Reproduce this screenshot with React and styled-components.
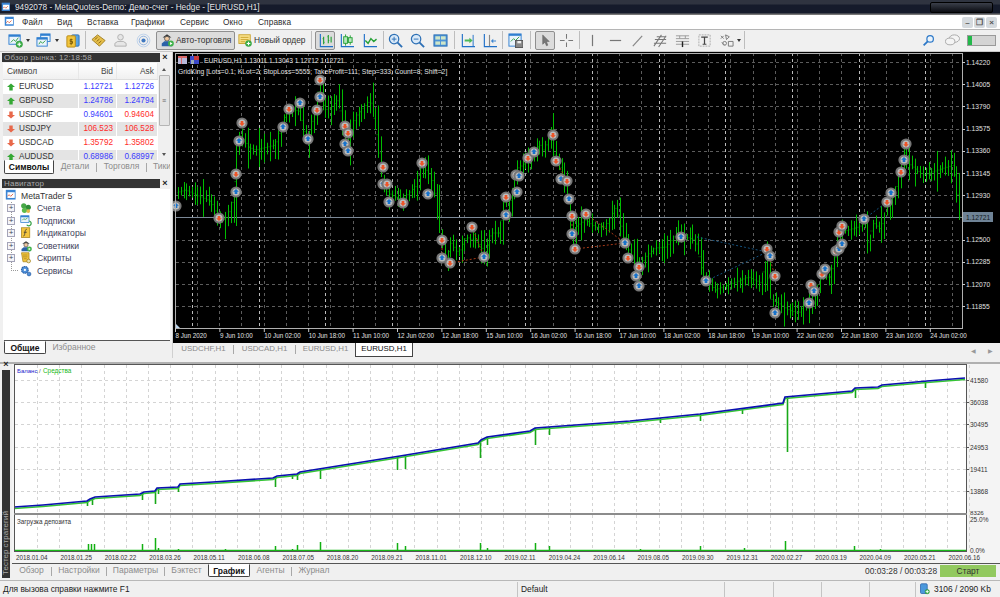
import React from 'react';
import styled, { createGlobalStyle } from 'styled-components';

const GlobalStyle = createGlobalStyle`
  html, body {
    margin: 0;
    padding: 0;
    overflow: hidden;
    background: #f0f0f0;
  }
  * { box-sizing: border-box; }
`;

const Terminal = styled.div`
  width: 1000px;
  height: 597px;
  display: flex;
  flex-direction: column;
  overflow: hidden;
  background: #f0f0f0;
  color: #333;
  font-family: "Liberation Sans", Arial, sans-serif;
  font-size: 8.4px;
`;

/* title + menu */
const TitleBar = styled.div`
  height: 15px;
  flex: none;
  display: flex;
  align-items: center;
  padding: 0 7px 1px 1px;
  gap: 3px;
  background: linear-gradient(#2f3440 0, #2f3440 4px, #151b2b 5px, #151b2b 13px, #777 14px);
  color: #e6e6e6;
  font-size: 8.25px;
`;

const TitleText = styled.span`
  flex: 1;
`;

const WindowButtons = styled.div`
  width: 63px;
  height: 11px;
  border: 1px solid #000;
  border-radius: 2px;
  background: linear-gradient(#3b3f4a, #0a0c12);
`;

const MenuBar = styled.div`
  height: 15px;
  flex: none;
  display: flex;
  align-items: center;
  padding: 0 3px 0 4px;
  background: #fff;
  border-bottom: 1px solid #b5b5b5;
`;

const MenuGap = styled.span`
  width: 6px;
  flex: none;
`;

const MenuItem = styled.span`
  width: ${p => p.$w}px;
  font-size: 8.3px;
  letter-spacing: 0.1px;
  color: #2c2c2c;
`;

const MdiButtons = styled.div`
  margin-left: auto;
  display: flex;
  gap: 1px;
`;

const MdiButton = styled.div`
  width: 11px;
  height: 11px;
  border-radius: 2px;
  background: #d5dade;
  color: #555;
  font-size: 8px;
  line-height: 11px;
  text-align: center;
  font-weight: bold;
`;

/* toolbar */
const Toolbar = styled.div`
  height: 22px;
  flex: none;
  display: flex;
  align-items: center;
  padding: 0 4px 1px 7px;
  background: #f0f0f0;
  border-bottom: 1px solid #c8c8c8;
`;

const Tool = styled.div`
  width: ${p => p.$w}px;
  height: 19px;
  margin-left: ${p => p.$ml || 0}px;
  flex: none;
  display: flex;
  align-items: center;
  justify-content: center;
  border: ${p => (p.$on ? '1px solid #8f8f8f' : 'none')};
  border-radius: 2px;
  background: ${p => (p.$on ? '#dcdcdc' : 'transparent')};
`;

const Caret = styled.div`
  width: ${p => p.$w}px;
  flex: none;
  display: flex;
  justify-content: center;
  &::after {
    content: '';
    border-left: 2.5px solid transparent;
    border-right: 2.5px solid transparent;
    border-top: 3px solid #333;
  }
`;

const Sep = styled.div`
  width: ${p => p.$w}px;
  height: 18px;
  flex: none;
  display: flex;
  justify-content: center;
  &::after {
    content: '';
    width: 1px;
    background: #bdbdbd;
  }
`;

const TextTool = styled.div`
  width: ${p => p.$w}px;
  height: 19px;
  margin-left: ${p => p.$ml || 0}px;
  flex: none;
  display: flex;
  align-items: center;
  gap: 2px;
  padding-left: 3px;
  border: ${p => (p.$on ? '1px solid #8f8f8f' : 'none')};
  border-radius: 2px;
  background: ${p => (p.$on ? '#dcdcdc' : 'transparent')};
  font-size: 8.4px;
  color: #333;
  white-space: nowrap;
`;

const Meter = styled.div`
  width: 29px;
  height: 11px;
  margin-left: 3px;
  border: 1px solid #9a9a9a;
  background: linear-gradient(90deg, #22b84a 0, #22b84a 4px, #d4d4d4 4px);
`;

const Spacer = styled.div`
  flex: 1;
`;

/* workspace */
const Workspace = styled.div`
  height: 306px;
  flex: none;
  display: flex;
`;

const LeftColumn = styled.div`
  width: 173px;
  flex: none;
  display: flex;
  flex-direction: column;
  padding-top: 1px;
  border-right: 1px solid #d0d0d0;
`;

const PanelTitle = styled.div`
  height: 9px;
  flex: none;
  display: flex;
  align-items: center;
  justify-content: space-between;
  margin: 0 2px;
  color: #aaa;
  font-size: 8px;
  letter-spacing: 0.2px;
`;

const PanelCaption = styled.div`
  width: 158px;
  height: 9px;
  padding-left: 2px;
  line-height: 9px;
  background: #333;
  white-space: nowrap;
`;

const PanelClose = styled.div`
  width: 8px;
  color: #222;
  font-weight: bold;
  font-size: 9px;
  line-height: 9px;
  text-align: center;
  margin-right: 1px;
`;

const MarketBody = styled.div`
  height: 97px;
  flex: none;
  display: flex;
  margin: 1px 2px 0 3px;
  overflow: hidden;
  background: #fff;
`;

const MarketTable = styled.div`
  width: 155px;
  flex: none;
`;

const MarketHead = styled.div`
  display: grid;
  grid-template-columns: 76px 38px 41px;
  height: 17px;
  line-height: 16px;
  background: linear-gradient(#fff, #f0f0f0);
  border-bottom: 1px solid #ddd;
  font-size: 8.4px;
  color: #444;
`;

const HeadCell = styled.div`
  padding: 0 3px;
  text-align: ${p => (p.$left ? 'left' : 'right')};
  padding-left: ${p => (p.$left ? '4px' : '3px')};
  border-right: 1px solid #e8e8e8;
`;

const MarketRow = styled.div`
  display: grid;
  grid-template-columns: 76px 38px 41px;
  height: 14px;
  line-height: 14px;
  background: ${p => (p.$odd ? '#e4e4e4' : '#fff')};
  font-size: 8.2px;
`;

const SymbolCell = styled.div`
  display: flex;
  align-items: center;
  gap: 4px;
  padding-left: 4px;
  color: #333;
  border-right: 1px solid #fff;
`;

const QuoteCell = styled.div`
  padding-right: 3px;
  text-align: right;
  color: ${p => (p.$up ? '#3a3aff' : '#ff2a2a')};
  border-right: 1px solid #fff;
`;

const ScrollBar = styled.div`
  width: 12px;
  flex: none;
  display: flex;
  flex-direction: column;
  align-items: center;
  background: #f0f0f0;
`;

const ScrollArrow = styled.div`
  height: 12px;
  flex: none;
  display: flex;
  align-items: center;
  &::after {
    content: '';
    border-left: 2.5px solid transparent;
    border-right: 2.5px solid transparent;
    ${p => (p.$down ? 'border-top: 3px solid #555;' : 'border-bottom: 3px solid #555;')}
  }
`;

const ScrollThumb = styled.div`
  width: 11px;
  height: 51px;
  flex: none;
  display: flex;
  align-items: center;
  justify-content: center;
  border: 1px solid #b5b5b5;
  border-radius: 1px;
  background: #e4e4e4;
  color: #666;
  font-size: 7px;
`;

const TabStrip = styled.div`
  height: ${p => p.$h || 14}px;
  flex: none;
  display: flex;
  align-items: stretch;
  margin: ${p => p.$m || 0};
  padding-left: ${p => p.$pl || 0}px;
  overflow: hidden;
  border-top: ${p => (p.$line ? '1px solid #555' : 'none')};
  background: ${p => p.$bg || 'transparent'};
  white-space: nowrap;
  font-size: 8.5px;
`;

const Tab = styled.div`
  width: ${p => p.$w}px;
  height: ${p => (p.$short ? '13px' : 'auto')};
  flex: none;
  text-align: center;
  line-height: 13px;
  color: ${p => (p.$on ? '#111' : '#8c8c8c')};
  background: ${p => (p.$on ? '#fff' : 'transparent')};
  font-weight: ${p => (p.$on ? 'bold' : 'normal')};
  border: ${p => (p.$on ? '1px solid #444' : 'none')};
  border-top: ${p => (p.$on ? '1px solid #fff' : 'none')};
  border-radius: 0 0 2px 2px;
`;

const TabDivider = styled.div`
  width: 1px;
  height: 9px;
  align-self: center;
  flex: none;
  background: #a8a8a8;
`;

const NavigatorTitle = styled(PanelTitle)`
  margin-top: 5px;
`;

const NavigatorBody = styled.div`
  height: 151px;
  flex: none;
  margin: 1px 2px 0 3px;
  background: #fff;
  position: relative;
`;

const TreeRoot = styled.div`
  height: 13px;
  display: flex;
  align-items: center;
  gap: 3px;
  padding-left: 2px;
  font-size: 8.6px;
  color: #333;
`;

const TreeRow = styled.div`
  height: 12.5px;
  display: flex;
  align-items: center;
  gap: 5px;
  padding-left: 4px;
  font-size: 8.6px;
  color: #40405a;
`;

const TreeLine = styled.div`
  position: absolute;
  left: 8px;
  top: 13px;
  width: 7px;
  height: 69px;
  border-left: 1px dotted #999;
  border-bottom: 1px dotted #999;
`;

const Expander = styled.div`
  width: 8px;
  height: 8px;
  flex: none;
  position: relative;
  z-index: 1;
  border: 1px solid #a4a4b8;
  background: #f4f4f8;
  color: #445;
  font-size: 8px;
  line-height: 6px;
  text-align: center;
  visibility: ${p => (p.$hide ? 'hidden' : 'visible')};
`;

const ChartColumn = styled.div`
  flex: 1;
  display: flex;
  flex-direction: column;
`;

const ChartSvg = styled.svg`
  display: block;
  width: 827px;
  height: 291px;
  flex: none;
  background: #000;
`;

const AxisText = styled.text`
  font-family: "Liberation Sans", Arial, sans-serif;
  font-size: ${p => p.$size || 6.7}px;
  fill: ${p => p.$fill || '#e0e0e0'};
`;

const ChartTabs = styled.div`
  height: 15px;
  flex: none;
  display: flex;
  align-items: flex-start;
  padding-left: 1px;
  font-size: 7.9px;
`;

const ChartTab = styled.div`
  width: ${p => p.$w}px;
  height: ${p => (p.$on ? 14 : 13)}px;
  flex: none;
  text-align: center;
  line-height: 12px;
  color: ${p => (p.$on ? '#111' : '#8a8a8a')};
  background: ${p => (p.$on ? '#fff' : 'transparent')};
  border: ${p => (p.$on ? '1px solid #444' : 'none')};
  border-top: none;
`;

const ChartTabDivider = styled(TabDivider)`
  align-self: flex-start;
  margin-top: 2px;
`;

const TabArrows = styled.div`
  margin-left: auto;
  display: flex;
  gap: 12px;
  padding: 4px 7px 0 0;
  color: #999;
  font-size: 6px;
`;

const Splitter = styled.div`
  height: 6px;
  flex: none;
  background: #f0f0f0;
  border-bottom: 2px solid #b0b0b0;
`;

/* strategy tester */
const Tester = styled.div`
  height: 214px;
  flex: none;
  display: flex;
`;

const TesterSide = styled.div`
  width: 12px;
  flex: none;
  display: flex;
  flex-direction: column;
  padding-left: 2px;
  margin-top: -4px;
`;

const TesterClose = styled(PanelClose)`
  height: 10px;
  margin: 0;
`;

const TesterCaption = styled.div`
  flex: 1;
  width: 8px;
  padding-top: 3px;
  background: #333;
  color: #aaa;
  font-size: 8px;
  line-height: 8px;
  writing-mode: vertical-rl;
  transform: rotate(180deg);
  white-space: nowrap;
`;

const TesterMain = styled.div`
  flex: 1;
  display: flex;
  flex-direction: column;
`;

const PlotSvg = styled.svg`
  display: block;
  width: 988px;
  height: 199px;
  flex: none;
  background: #f4f4f4;
`;

const TesterTabs = styled(TabStrip)`
  align-items: flex-start;
`;

const TesterClock = styled.div`
  margin-left: auto;
  width: 75px;
  line-height: 14px;
  font-size: 8.4px;
  color: #333;
`;

const StartButton = styled.div`
  width: 56px;
  height: 12px;
  margin: 1px 4px 0 0;
  flex: none;
  background: #92c95f;
  color: #333;
  text-align: center;
  line-height: 12px;
  font-size: 8.4px;
`;

const StatusBar = styled.div`
  height: 17px;
  flex: none;
  margin-top: 2px;
  display: flex;
  align-items: center;
  border-top: 1px solid #b8b8b8;
  background: #f0f0f0;
  font-size: 8.4px;
  color: #222;
`;

const StatusCell = styled.div`
  width: ${p => p.$w}px;
  height: 15px;
  flex: none;
  display: flex;
  align-items: center;
  gap: 3px;
  padding-left: 3px;
  border-right: ${p => (p.$last ? 'none' : '1px solid #c4c4c4')};
  white-space: nowrap;
`;

const GlyphSvg = styled.svg`
  flex: none;
  display: block;
`;

/* drawings */
const Win = ({ x = 1, y = 2, w = 12, h = 10, c = '#2f7fd0' }) => (
  <g>
    <rect x={x} y={y} width={w} height={h} fill="#eaf3fb" stroke={c} />
    <rect x={x} y={y} width={w} height={2} fill={c} />
  </g>
);

const Plus = ({ cx = 12, cy = 12, r = 3.5 }) => (
  <g>
    <circle cx={cx} cy={cy} r={r} fill="#3fb24a" stroke="#1f8a2c" strokeWidth="0.5" />
    <path d={`M${cx - 2} ${cy}h4M${cx} ${cy - 2}v4`} stroke="#fff" strokeWidth="1.2" />
  </g>
);

const Axes = () => <path d="M2.5 1v13.5H16" fill="none" stroke="#1f70c8" strokeWidth="1.2" />;

const drawings = {
  newChart: <><Win /><path d="M3 10l3-3 2 2 3-4" fill="none" stroke="#35a045" /><Plus /></>,
  profiles: <><Win x={5} y={1} w={10} h={8} /><Win x={1} y={5} w={11} h={9} /><path d="M3 12l2-3 2 2 3-3" fill="none" stroke="#35a045" /></>,
  money: <><rect x="7" y="2" width="8" height="12" rx="1" fill="#5aa3e0" stroke="#2c6fb5" /><rect x="2" y="3" width="9" height="12" rx="1" fill="#f2c53d" stroke="#b98a14" /><path d="M6.5 6v7M8 7H5.5v2H8v2H5" fill="none" stroke="#7a5a08" /></>,
  book: <><path d="M1 7l6-5 8 6-6 6z" fill="#e7bf4a" stroke="#a07e20" /><path d="M4 7l3-2.5M6 9l3-2.5M8 11l3-2.5" stroke="#8a6a14" /></>,
  person: <><circle cx="8" cy="4.5" r="3" fill="#e6e6e6" stroke="#b0b0b0" /><path d="M2 14v-3l3-2h6l3 2v3z" fill="#e6e6e6" stroke="#b0b0b0" /></>,
  wave: <><circle cx="8" cy="8" r="6.8" fill="none" stroke="#bcd0ea" /><circle cx="8" cy="8" r="4.6" fill="none" stroke="#8fb0dc" /><circle cx="8" cy="8" r="2.2" fill="#3f78c0" /></>,
  robot: <><path d="M3 5h10L8 1.5z" fill="#333" /><circle cx="8" cy="6.5" r="2.8" fill="#f0c8a0" stroke="#555" /><path d="M2 15v-3l3-2.5h6l3 2.5v3z" fill="#2c62a8" /><circle cx="12.5" cy="12" r="3.3" fill="#3fb24a" /><path d="M11.5 10.3v3.4l2.8-1.7z" fill="#fff" /></>,
  order: <><rect x="1" y="2" width="13" height="10" fill="#f8e08a" stroke="#c9a12a" /><path d="M3 5h9M3 7.5h9M3 10h5" stroke="#c9a12a" /><Plus cx={12} cy={12} /></>,
  bars: <><Axes /><path d="M6 4v8M5 6h1M6 10h1M11 2v9M10 4h1M11 8h1M14 4v6" fill="none" stroke="#25a035" strokeWidth="1.2" /></>,
  candles: <><Axes /><path d="M7 1.5v12M12 2.5v10" stroke="#25a035" /><rect x="5" y="4" width="4" height="7" fill="#b8e8be" stroke="#25a035" /><rect x="10" y="5" width="4" height="5" fill="#b8e8be" stroke="#25a035" /></>,
  line: <><Axes /><path d="M3.5 8l3 3 3-5 3 3 3-2.5" fill="none" stroke="#25a035" strokeWidth="1.5" /></>,
  zoomIn: <><circle cx="6.5" cy="6.5" r="5" fill="#d9e9f8" stroke="#2c6fb5" strokeWidth="1.3" /><path d="M10 10l5 5" stroke="#2c6fb5" strokeWidth="2" /><path d="M4 6.5h5M6.5 4v5" stroke="#2c6fb5" /></>,
  zoomOut: <><circle cx="6.5" cy="6.5" r="5" fill="#d9e9f8" stroke="#2c6fb5" strokeWidth="1.3" /><path d="M10 10l5 5" stroke="#2c6fb5" strokeWidth="2" /><path d="M4 6.5h5" stroke="#2c6fb5" /></>,
  tile: <><rect x="1" y="2" width="14" height="12" fill="#4d94d8" stroke="#2c6fb5" /><rect x="2.5" y="3.5" width="5" height="3.5" fill="#cfe6c8" /><rect x="8.5" y="3.5" width="5" height="3.5" fill="#cfe6c8" /><rect x="2.5" y="9" width="5" height="3.5" fill="#cfe6c8" /><rect x="8.5" y="9" width="5" height="3.5" fill="#cfe6c8" /></>,
  shift: <><Axes /><path d="M14 2v12" stroke="#1f70c8" /><path d="M5 7h5V5l3.5 3L10 11V9H5z" fill="#4cb858" /></>,
  scroll: <><Axes /><path d="M8 2v12" stroke="#888" strokeWidth="1.2" /><path d="M15 8H12V6l-2.5 2.5L12 11V9h3z" fill="#3f86d0" /></>,
  template: <><Win x={1} y={1} w={13} h={13} /><path d="M3 9l3-3 2 2 4-4" fill="none" stroke="#35a045" /><rect x="8" y="8" width="8" height="7.5" fill="#888" stroke="#555" /><rect x="10" y="8.5" width="4" height="2.5" fill="#eee" /></>,
  cursor: <path d="M5 2l7 7H9l1.5 4-1.5.6L7.5 9.8 5 12z" fill="#777" stroke="#555" strokeWidth="0.5" />,
  cross: <path d="M8 1v5M8 10v5M1 8h5M10 8h5" stroke="#777" strokeWidth="1.1" />,
  vline: <path d="M8 2v12" stroke="#777" strokeWidth="1.3" />,
  hline: <path d="M2 8h12" stroke="#777" strokeWidth="1.3" />,
  dline: <path d="M3 14L13 3" stroke="#888" strokeWidth="1.3" />,
  channel: <path d="M1 14L9 2M6 15l8-12M1 11h13M2 7h12M4 4h10" fill="none" stroke="#777" strokeWidth="1.1" />,
  fibo: <><path d="M1 3h14M1 6h14M1 9h14M1 12h14" stroke="#999" /><path d="M11 3v3M5 3v3" stroke="#999" /><path d="M8 9v6" stroke="#222" strokeWidth="1.5" /></>,
  text: <><rect x="2" y="2" width="12" height="12" fill="none" stroke="#aaa" strokeDasharray="2 1" /><path d="M4.5 4.5h7M8 4.5V12M6 12h4" stroke="#444" strokeWidth="1.3" /></>,
  shapes: <><path d="M2 3l3 3M5 3L2 6M7 2l4 2-3 3zM3 10l3 3M10 9h5v5h-5z" fill="none" stroke="#777" /><circle cx="6" cy="11" r="2" fill="none" stroke="#777" /></>,
  search: <><circle cx="10" cy="6" r="4" fill="#eaf3fb" stroke="#2c78c8" strokeWidth="1.5" /><path d="M7 9l-5 5" stroke="#2c78c8" strokeWidth="2.2" /></>,
  chat: <><ellipse cx="10" cy="6" rx="5.5" ry="4" fill="#f4f4f4" stroke="#a8a8a8" /><ellipse cx="5.5" cy="9" rx="5" ry="3.6" fill="#f4f4f4" stroke="#a8a8a8" /></>,
  logo: <><rect x="1" y="1" width="12" height="12" fill="#3a84d4" /><rect x="3" y="4" width="9" height="7" fill="#fff" /><path d="M3 9l2-2 2 2 3-3" fill="none" stroke="#d95030" /></>,
  accounts: <><circle cx="5" cy="5" r="3.5" fill="#48a848" /><circle cx="11" cy="7" r="3.5" fill="#2e8c38" /><circle cx="6" cy="11" r="3.5" fill="#5cbc4c" /><circle cx="11" cy="12" r="2.5" fill="#e0b84a" /></>,
  subs: <><Win x={1} y={1} w={11} h={9} /><path d="M3 7l2-2 2 1 3-2" fill="none" stroke="#35a045" /><path d="M9 13a3.2 3.2 0 1 0 3-5" fill="none" stroke="#35a045" strokeWidth="1.6" /></>,
  indicators: <><rect x="2" y="1" width="11" height="13" fill="#f4c63f" stroke="#a8841c" /><path d="M9 3C7 3 7 5 6.5 8S6 12 4.5 12M5 7h4" fill="none" stroke="#333" /></>,
  scripts: <><path d="M2 1h10v12H4z" fill="#f2c53d" stroke="#a8841c" /><path d="M4 4h6M4 6.5h6M5 9h4" stroke="#a8841c" /><circle cx="11.5" cy="12" r="2.5" fill="#e9e2b8" stroke="#a8841c" /></>,
  services: <><circle cx="6.5" cy="6.5" r="4.5" fill="#4e8fd8" stroke="#2c62a8" strokeDasharray="2 0.7" strokeWidth="1.5" /><circle cx="6.5" cy="6.5" r="1.5" fill="#fff" /><circle cx="12" cy="12" r="2.5" fill="#4e8fd8" stroke="#2c62a8" /></>,
  disk: <><rect x="2" y="1" width="9" height="13" rx="1.5" fill="#4a98dc" stroke="#2c62a8" /><Plus cx={11} cy={11.5} r={3} /></>,
};

const Glyph = ({ name, size = 16 }) => (
  <GlyphSvg width={size} height={size} viewBox="0 0 16 16">
    {drawings[name]}
  </GlyphSvg>
);

const TrendArrow = ({ up }) => (
  <GlyphSvg width="8" height="8" viewBox="0 0 7 7">
    {up
      ? <path d="M3.5 0.5L7 3.5H5V6.5H2V3.5H0z" fill="#35a835" />
      : <path d="M3.5 6.5L7 3.5H5V0.5H2V3.5H0z" fill="#e8684a" />}
  </GlyphSvg>
);

/* data */
const menu = [['Файл', 35], ['Вид', 30], ['Вставка', 44], ['Графики', 49], ['Сервис', 43], ['Окно', 35], ['Справка', 40]];

const quotes = [
  ['EURUSD', '1.12721', '1.12726', 1, 1, 1],
  ['GBPUSD', '1.24786', '1.24794', 1, 1, 1],
  ['USDCHF', '0.94601', '0.94604', 1, 0, 0],
  ['USDJPY', '106.523', '106.528', 0, 0, 0],
  ['USDCAD', '1.35792', '1.35802', 0, 0, 0],
  ['AUDUSD', '0.68986', '0.68997', 1, 1, 1],
];

const tree = [['accounts', 'Счета'], ['subs', 'Подписки'], ['indicators', 'Индикаторы'], ['robot', 'Советники'], ['scripts', 'Скрипты'], ['services', 'Сервисы']];

const priceTrack = [
  [176, 205], [177, 193], [187, 190], [203, 197], [213, 202], [220, 218], [227, 220], [233, 207], [237, 177], [240, 133], [250, 147], [257, 150], [277, 145], [283, 127], [288, 113], [300, 110], [303, 120], [308, 140], [317, 113], [320, 90], [327, 110], [333, 107], [340, 100], [345, 127], [348, 147], [357, 117], [363, 110], [372, 100], [377, 127], [382, 160], [383, 180], [390, 193], [403, 200], [417, 187], [423, 163], [433, 177], [438, 200], [440, 225], [442, 240], [447, 263], [453, 243], [460, 253], [468, 237], [480, 243], [487, 253], [493, 233], [502, 233], [505, 203], [513, 200], [517, 170], [527, 163], [533, 152], [542, 145], [545, 150], [553, 135], [557, 160], [563, 170], [568, 187], [570, 217], [573, 233], [577, 227], [587, 220], [597, 227], [607, 227], [618, 207], [622, 223], [627, 243], [633, 253], [640, 270], [647, 257], [657, 248], [668, 247], [677, 235], [687, 237], [697, 240], [702, 263], [707, 280], [717, 290], [730, 285], [750, 277], [763, 283], [767, 255], [770, 277], [773, 300], [780, 303], [790, 310], [800, 313], [808, 303], [817, 293], [823, 277], [832, 277], [837, 257], [840, 233], [850, 230], [860, 227], [868, 223], [870, 243], [875, 223], [883, 230], [887, 207], [893, 203], [900, 180], [905, 150], [912, 165], [925, 175], [940, 170], [955, 165], [960, 200], [962, 217],
];

const interpolate = (track, x) => {
  for (let i = 1; i < track.length; i++) {
    if (x <= track[i][0]) {
      const [x0, y0] = track[i - 1];
      const [x1, y1] = track[i];
      return y0 + ((y1 - y0) * (x - x0)) / (x1 - x0 || 1);
    }
  }
  return track[track.length - 1][1];
};

// one path for the wicks, one dimmer for the open/close ticks
const buildBars = () => {
  let seed = 77;
  const rnd = () => {
    seed = (seed * 1664525 + 1013904223) % 4294967296;
    return seed / 4294967296;
  };
  let wicks = '';
  let ticks = '';
  for (let x = 178; x < 961; x += 2.78) {
    const px = Math.round(x) + 0.5;
    const mid = interpolate(priceTrack, x);
    const next = interpolate(priceTrack, x + 2.78);
    const spike = rnd() < 0.12 ? 9 : 0;
    const spread = 3 + rnd() * 7 + Math.abs(next - mid) * 0.6;
    const up = mid - spread * (0.5 + rnd()) - (rnd() < 0.5 ? spike : 0);
    const down = mid + spread * (0.5 + rnd()) + spike;
    wicks += `M${px} ${up.toFixed(1)}V${down.toFixed(1)}`;
    ticks += `M${px - 1} ${mid.toFixed(1)}h1M${px} ${next.toFixed(1)}h1`;
  }
  return { wicks, ticks };
};

const marks = [
  ['b', 176, 206], ['r', 219, 218], ['b', 236, 192], ['r', 236, 174], ['b', 239, 141], ['r', 242, 123], ['b', 283, 127], ['r', 289, 109], ['b', 300, 103], ['b', 308, 139], ['r', 317, 110], ['b', 320, 97], ['r', 320, 80], ['r', 345, 126], ['r', 348, 133], ['b', 345, 144], ['b', 348, 151], ['r', 383, 167], ['b', 383, 184], ['r', 387, 184], ['b', 389, 202], ['r', 403, 203], ['b', 428, 194], ['r', 422, 163],
  ['r', 442, 240], ['b', 442, 258], ['r', 450, 263], ['r', 472, 227], ['b', 484, 257], ['r', 506, 197], ['b', 506, 215], ['b', 517, 192], ['r', 516, 175], ['b', 519, 176], ['r', 528, 158], ['b', 534, 152], ['r', 553, 135], ['r', 556, 161], ['b', 561, 179], ['r', 567, 181], ['b', 569, 199], ['r', 572, 216], ['b', 572, 234], ['r', 575, 249], ['r', 586, 214], ['b', 625, 243], ['r', 628, 258], ['r', 639, 267], ['b', 636, 276], ['b', 639, 286], ['b', 681, 237], ['b', 706, 281],
  ['r', 767, 249], ['b', 770, 256], ['r', 775, 276], ['b', 775, 313], ['b', 809, 303], ['r', 811, 285], ['b', 814, 291], ['r', 822, 274], ['b', 825, 269], ['r', 836, 251], ['b', 839, 249], ['b', 842, 244], ['r', 839, 232], ['r', 842, 226], ['b', 864, 219], ['r', 887, 202], ['b', 891, 193], ['r', 901, 172], ['b', 904, 160], ['r', 906, 144],
];

const tradeLines = [
  ['#a83a18', 450, 263, 484, 257], ['#a83a18', 472, 227, 484, 257], ['#a83a18', 442, 240, 442, 258],
  ['#a83a18', 586, 214, 625, 243], ['#a83a18', 575, 249, 625, 243], ['#a83a18', 556, 161, 567, 181], ['#a83a18', 572, 216, 572, 234],
  ['#14507c', 697, 237, 767, 252], ['#14507c', 706, 281, 767, 252], ['#14507c', 864, 219, 887, 202], ['#a83a18', 767, 249, 775, 276],
];

const priceLabels = ['1.14220', '1.14005', '1.13790', '1.13575', '1.13360', '1.13145', '1.12930', null, '1.12500', '1.12285', '1.12070', '1.11855'];
const priceGrid = Array.from({ length: 12 }, (_, i) => 62 + i * 22.2);

const timeLabels = ['8 Jun 2020', '9 Jun 10:00', '10 Jun 02:00', '10 Jun 18:00', '11 Jun 10:00', '12 Jun 02:00', '12 Jun 18:00', '15 Jun 10:00', '16 Jun 02:00', '16 Jun 18:00', '17 Jun 10:00', '18 Jun 02:00', '18 Jun 18:00', '19 Jun 10:00', '22 Jun 02:00', '22 Jun 18:00', '23 Jun 10:00', '24 Jun 02:00'];

const Marker = ({ kind, x, y }) => (
  <g>
    <circle cx={x} cy={y} r="5.6" fill="#767676" />
    <circle cx={x} cy={y} r="3.5" fill="#bcbcbc" />
    <path
      d={kind === 'r'
        ? `M${x} ${y + 3}l-2.8-2.8h1.5v-2.2h2.6v2.2h1.5z`
        : `M${x} ${y - 3}l-2.8 2.8h1.5v2.2h2.6v-2.2h1.5z`}
      fill={kind === 'r' ? '#ee5528' : '#1672cc'}
    />
  </g>
);

const PriceChart = () => {
  const verticals = Array.from({ length: 35 }, (_, i) => Math.round(197 + i * 22.22) + 0.5);
  const days = Array.from({ length: 12 }, (_, i) => Math.round(192 + i * 66.66) + 0.5);
  const { wicks, ticks } = buildBars();
  return (
    <ChartSvg viewBox="173 52 827 291">
      <g stroke="#5c5c5c" strokeDasharray="3 3" strokeWidth="1">
        {priceGrid.map(y => <line key={y} x1="176" x2="962" y1={Math.round(y) + 0.5} y2={Math.round(y) + 0.5} />)}
        {verticals.map(x => <line key={x} x1={x} x2={x} y1="53" y2="328" />)}
      </g>
      <g stroke="#bcbcbc" strokeDasharray="3 3" strokeWidth="1">
        {days.map(x => <line key={x} x1={x} x2={x} y1="53" y2="328" />)}
      </g>
      <line x1="176" x2="962" y1="217.5" y2="217.5" stroke="#7a8796" />
      <path d={ticks} stroke="#007a00" strokeWidth="1" fill="none" />
      <path d={wicks} stroke="#00bc00" strokeWidth="1" fill="none" />
      <g strokeDasharray="2 2" strokeWidth="1">
        {tradeLines.map(([c, x1, y1, x2, y2]) => (
          <line key={`${x1}-${y1}-${x2}`} x1={x1} y1={y1} x2={x2} y2={y2} stroke={c} />
        ))}
      </g>
      {marks.map(([kind, x, y]) => <Marker key={`${x}-${y}`} kind={kind} x={x} y={y} />)}
      <rect x="175.5" y="53.5" width="787" height="275" fill="none" stroke="#b0b0b0" />
      <path d="M176 328v-4l4 4z" fill="#bcd6ee" />
      <rect x="178" y="56" width="9" height="8" fill="#b8b8d8" />
      <path d="M178 56h9v2h-9zM181 58h1v6h-1z" fill="#d86a6a" />
      <rect x="190" y="56" width="9" height="8" fill="#3a48c8" />
      <path d="M194 56h5v4h-5z" fill="#c83a3a" />
      <path d="M191 60h3v4h-3z" fill="#9ab" />
      <AxisText x="204" y="63" $size={6.6}>EURUSD,H1  1.13011 1.13043 1.12712 1.12721</AxisText>
      <AxisText x="178" y="74" $size={6.75}>GridKing [Lots=0.1; KLot=2; StopLoss=5555; TakeProfit=111; Step=333; Count=8; Shift=2]</AxisText>
      {priceGrid.map((y, i) => priceLabels[i] && (
        <g key={y}>
          <line x1="962" x2="965" y1={Math.round(y) + 0.5} y2={Math.round(y) + 0.5} stroke="#c8c8c8" />
          <AxisText x="966" y={y + 2.5}>{priceLabels[i]}</AxisText>
        </g>
      ))}
      <rect x="963" y="212" width="30" height="10" fill="#6f8396" />
      <AxisText x="966" y="220" $fill="#101820">1.12721</AxisText>
      {timeLabels.map((label, i) => (
        <g key={label}>
          <line x1={175.5 + i * 44.4} x2={175.5 + i * 44.4} y1="328" y2="332" stroke="#c8c8c8" />
          <AxisText x={175.5 + i * 44.4} y="338" $size={6.3}>{label}</AxisText>
        </g>
      ))}
    </ChartSvg>
  );
};

const balance = [[14, 507], [43, 505], [87, 501], [90, 499], [95, 497], [140, 494], [144, 492], [155, 491], [157, 488], [178, 487], [180, 484], [213, 482], [273, 478], [277, 476], [297, 474], [300, 472], [350, 464], [400, 456], [478, 443], [481, 440], [487, 437], [530, 431], [535, 428], [630, 421], [700, 414], [783, 403], [785, 397], [852, 391], [855, 388], [878, 387], [882, 385], [927, 381], [965, 378]];

const dips = [[87, 506], [92, 505], [142, 500], [155, 504], [158, 494], [178, 492], [275, 487], [292, 479], [297, 480], [320, 479], [397, 470], [405, 469], [480, 458], [487, 445], [535, 445], [549, 435], [660, 423], [700, 421], [742, 414], [787, 452], [855, 398], [925, 388]];

const loads = [[88, 7], [91, 7], [94, 7], [142, 7], [155, 13], [158, 3], [178, 2], [275, 5], [292, 2], [297, 6], [320, 9], [397, 8], [405, 5], [480, 8], [487, 3], [535, 8], [549, 5], [700, 5], [744, 3], [785, 10], [854, 5], [30, 1], [45, 1], [225, 2], [640, 2], [880, 2]];

const balanceLabels = ['41580', '36038', '30495', '24953', '19411', '13868'];
const dateLabels = ['2018.01.04', '2018.01.25', '2018.02.22', '2018.03.26', '2018.05.11', '2018.06.08', '2018.07.05', '2018.08.20', '2018.09.21', '2018.11.01', '2018.12.10', '2019.02.11', '2019.04.24', '2019.06.14', '2019.08.05', '2019.09.30', '2019.12.31', '2020.02.27', '2020.03.19', '2020.04.09', '2020.05.21', '2020.06.16'];

const BalancePlot = () => {
  const line = balance.map(p => p.join(',')).join(' ');
  const equity = balance.map(([x, y]) => `${x},${y + 1.5}`).join(' ');
  const verticals = Array.from({ length: 43 }, (_, i) => Math.round(37 + i * 22.2) + 0.5);
  const rows = balanceLabels.map((_, i) => 380.5 + Math.round(i * 22.2));
  return (
    <PlotSvg viewBox="12 364 988 199">
      <rect x="14.5" y="364.5" width="952" height="187" fill="#fff" />
      <g stroke="#d4d4d4" strokeDasharray="3 3">
        {verticals.map(x => <line key={x} x1={x} x2={x} y1="365" y2="551" />)}
        {rows.map(y => <line key={y} x1="15" x2="966" y1={y} y2={y} />)}
      </g>
      <path d={dips.map(([x, y]) => `M${x + 0.5} ${Math.round(interpolate(balance, x))}V${y}`).join('')} stroke="#18a818" strokeWidth="1.6" fill="none" />
      <polyline points={equity} fill="none" stroke="#35c435" strokeWidth="1.6" />
      <polyline points={line} fill="none" stroke="#0a10b0" strokeWidth="1.7" />
      <path d={loads.map(([x, h]) => `M${x + 0.5} 551V${551 - h}`).join('')} stroke="#12b012" strokeWidth="1.5" fill="none" />
      <line x1="15" x2="966" y1="550.5" y2="550.5" stroke="#18b818" strokeWidth="1.5" />
      <rect x="14.5" y="364.5" width="952" height="187" fill="none" stroke="#555" />
      <rect x="14" y="513" width="953" height="2" fill="#8c8c8c" />
      <AxisText x="17" y="372.5" $size={6} $fill="#2222cc">Баланс</AxisText>
      <AxisText x="39" y="372.5" $size={6} $fill="#555">/</AxisText>
      <AxisText x="43" y="372.5" $size={6.4} $fill="#20b820">Средства</AxisText>
      <AxisText x="17" y="523.5" $size={6.3} $fill="#333">Загрузка депозита</AxisText>
      {balanceLabels.map((label, i) => (
        <g key={label}>
          <line x1="966" x2="969" y1={rows[i]} y2={rows[i]} stroke="#555" />
          <AxisText x="970" y={rows[i] + 2.5} $size={6.5} $fill="#333">{label}</AxisText>
        </g>
      ))}
      <AxisText x="970" y="515" $size={6.2} $fill="#333">8326</AxisText>
      <AxisText x="970" y="522" $size={6.5} $fill="#333">25.0%</AxisText>
      <AxisText x="970" y="552.5" $size={6.5} $fill="#333">0.0%</AxisText>
      {dateLabels.map((label, i) => (
        <AxisText key={label} x={16 + i * 44.4} y="560" $size={6.3} $fill="#333">{label}</AxisText>
      ))}
    </PlotSvg>
  );
};

const tools = [
  ['tool', 'newChart', 16], ['caret', 10], ['tool', 'profiles', 20], ['caret', 8], ['tool', 'money', 22], ['sep', 4],
  ['tool', 'book', 22], ['tool', 'person', 23], ['tool', 'wave', 22],
];

const toolsAfter = [
  ['sep', 8], ['on', 'bars', 20], ['tool', 'candles', 22], ['tool', 'line', 24], ['sep', 4], ['tool', 'zoomIn', 20], ['tool', 'zoomOut', 24], ['tool', 'tile', 22],
  ['sep', 6], ['tool', 'shift', 20], ['tool', 'scroll', 24], ['sep', 3], ['tool', 'template', 22], ['sep', 9], ['on', 'cursor', 20], ['tool', 'cross', 22], ['sep', 4],
  ['tool', 'vline', 22], ['tool', 'hline', 24], ['tool', 'dline', 20], ['tool', 'channel', 26], ['tool', 'fibo', 18], ['tool', 'text', 26], ['tool', 'shapes', 18], ['caret', 8], ['sep', 2],
];

const renderTools = list => list.map(([kind, a, b], i) => {
  if (kind === 'caret') return <Caret key={i} $w={a} />;
  if (kind === 'sep') return <Sep key={i} $w={a} />;
  return <Tool key={i} $w={b} $on={kind === 'on'}><Glyph name={a} size={15} /></Tool>;
});

export default function App() {
  return (
    <Terminal>
      <GlobalStyle />
      <TitleBar>
        <Glyph name="logo" size={11} />
        <TitleText>9492078 - MetaQuotes-Demo: Демо-счет - Hedge - [EURUSD,H1]</TitleText>
        <WindowButtons />
      </TitleBar>
      <MenuBar>
        <Glyph name="logo" size={12} />
        <MenuGap />
        {menu.map(([label, w]) => <MenuItem key={label} $w={w}>{label}</MenuItem>)}
        <MdiButtons>
          <MdiButton>–</MdiButton>
          <MdiButton>❐</MdiButton>
          <MdiButton>×</MdiButton>
        </MdiButtons>
      </MenuBar>
      <Toolbar>
        {renderTools(tools)}
        <TextTool $w={79} $ml={2} $on><Glyph name="robot" size={14} />Авто-торговля</TextTool>
        <TextTool $w={72}><Glyph name="order" size={14} />Новый ордер</TextTool>
        {renderTools(toolsAfter)}
        <Spacer />
        <Tool $w={16}><Glyph name="search" size={13} /></Tool>
        <Tool $w={24} $ml={4}><Glyph name="chat" size={15} /></Tool>
        <Meter />
      </Toolbar>
      <Workspace>
        <LeftColumn>
          <PanelTitle>
            <PanelCaption>Обзор рынка: 12:18:58</PanelCaption>
            <PanelClose>×</PanelClose>
          </PanelTitle>
          <MarketBody>
            <MarketTable>
              <MarketHead>
                <HeadCell $left>Символ</HeadCell>
                <HeadCell>Bid</HeadCell>
                <HeadCell>Ask</HeadCell>
              </MarketHead>
              {quotes.map(([symbol, bid, ask, bidUp, askUp, up], i) => (
                <MarketRow key={symbol} $odd={i % 2 === 1}>
                  <SymbolCell><TrendArrow up={up === 1} />{symbol}</SymbolCell>
                  <QuoteCell $up={bidUp === 1}>{bid}</QuoteCell>
                  <QuoteCell $up={askUp === 1}>{ask}</QuoteCell>
                </MarketRow>
              ))}
            </MarketTable>
            <ScrollBar>
              <ScrollArrow />
              <ScrollThumb>≡</ScrollThumb>
              <Spacer />
              <ScrollArrow $down />
            </ScrollBar>
          </MarketBody>
          <TabStrip $m="0 2px 0 4px">
            <Tab $w={50} $on>Символы</Tab>
            <Tab $w={42}>Детали</Tab>
            <TabDivider />
            <Tab $w={49}>Торговля</Tab>
            <TabDivider />
            <Tab $w={30}>Тики</Tab>
          </TabStrip>
          <NavigatorTitle>
            <PanelCaption>Навигатор</PanelCaption>
            <PanelClose>×</PanelClose>
          </NavigatorTitle>
          <NavigatorBody>
            <TreeLine />
            <TreeRoot><Glyph name="logo" size={13} />MetaTrader 5</TreeRoot>
            {tree.map(([icon, label], i) => (
              <TreeRow key={label}>
                <Expander $hide={i === 5}>+</Expander>
                <Glyph name={icon} size={12} />
                {label}
              </TreeRow>
            ))}
          </NavigatorBody>
          <TabStrip $m="0 2px 0 4px" $line>
            <Tab $w={42} $on>Общие</Tab>
            <Tab $w={56}>Избранное</Tab>
          </TabStrip>
        </LeftColumn>
        <ChartColumn>
          <PriceChart />
          <ChartTabs>
            <ChartTab $w={59}>USDCHF,H1</ChartTab>
            <ChartTabDivider />
            <ChartTab $w={61}>USDCAD,H1</ChartTab>
            <ChartTabDivider />
            <ChartTab $w={59}>EURUSD,H1</ChartTab>
            <ChartTab $w={58} $on>EURUSD,H1</ChartTab>
            <TabArrows><span>◀</span><span>▶</span></TabArrows>
          </ChartTabs>
        </ChartColumn>
      </Workspace>
      <Splitter />
      <Tester>
        <TesterSide>
          <TesterClose>×</TesterClose>
          <TesterCaption>Тестер стратегий</TesterCaption>
        </TesterSide>
        <TesterMain>
          <BalancePlot />
          <TesterTabs $h={15} $line>
            <Tab $w={39}>Обзор</Tab>
            <TabDivider />
            <Tab $w={54}>Настройки</Tab>
            <TabDivider />
            <Tab $w={57}>Параметры</Tab>
            <TabDivider />
            <Tab $w={43}>Бэктест</Tab>
            <Tab $w={42} $on $short>График</Tab>
            <Tab $w={41}>Агенты</Tab>
            <TabDivider />
            <Tab $w={44}>Журнал</Tab>
            <TesterClock>00:03:28 / 00:03:28</TesterClock>
            <StartButton>Старт</StartButton>
          </TesterTabs>
        </TesterMain>
      </Tester>
      <StatusBar>
        <StatusCell $w={518}>Для вызова справки нажмите F1</StatusCell>
        <StatusCell $w={207}>Default</StatusCell>
        <StatusCell $w={49} />
        <StatusCell $w={48} />
        <StatusCell $w={48} />
        <StatusCell $w={46} />
        <StatusCell $w={84} $last><Glyph name="disk" size={12} />3106 / 2090 Kb</StatusCell>
      </StatusBar>
    </Terminal>
  );
}
